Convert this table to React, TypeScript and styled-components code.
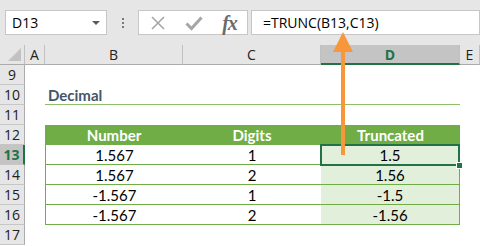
import React from "react";
import styled, { createGlobalStyle } from "styled-components";

const Global = createGlobalStyle`
  html, body { margin: 0; padding: 0; background: #ffffff; }
  body { width: 480px; height: 246px; overflow: hidden; }
`;

const UI_FONT = `"Open Sans", "Noto Sans", "Liberation Sans", sans-serif`;
const CELL_FONT = `Lato, "Liberation Sans", sans-serif`;

const Page = styled.div`
  position: relative;
  width: 480px;
  height: 246px;
  overflow: hidden;
  background: #ffffff;
`;

/* ---------- formula bar ---------- */
const Bar = styled.div`
  height: 45px;
  box-sizing: border-box;
  background: #e6e6e6;
  display: flex;
  align-items: flex-start;
  padding: 10px 0 0 5px;
`;

const Box = styled.div<{ $w?: number }>`
  height: 25px;
  box-sizing: border-box;
  background: #ffffff;
  border: 1px solid #c6c6c6;
  display: flex;
  align-items: center;
  ${(p) => (p.$w ? `width: ${p.$w}px; flex: none;` : "flex: 1;")}
`;

const NameText = styled.span`
  font-family: ${UI_FONT};
  font-size: 14px;
  color: #000;
  padding-left: 6px;
  flex: 1;
`;

const Caret = styled.span`
  width: 0;
  height: 0;
  border-left: 4px solid transparent;
  border-right: 4px solid transparent;
  border-top: 4px solid #5a5a5a;
  margin-right: 6px;
`;

const Grip = styled.div`
  width: 31px;
  height: 25px;
  flex: none;
  display: flex;
  flex-direction: column;
  align-items: center;
  justify-content: center;
  gap: 2px;
  & > i {
    display: block;
    width: 2px;
    height: 2px;
    background: #7a7a7a;
  }
`;

const IconSlot = styled.div<{ $w: number }>`
  width: ${(p) => p.$w}px;
  height: 23px;
  display: flex;
  align-items: center;
  justify-content: center;
  flex: none;
`;

const Fx = styled.span`
  font-family: "Liberation Serif", "DejaVu Serif", serif;
  font-style: italic;
  font-weight: bold;
  font-size: 20px;
  line-height: 20px;
  color: #6a6a6a;
  letter-spacing: -1px;
`;

const FormulaText = styled.span`
  font-family: ${UI_FONT};
  font-size: 14px;
  color: #000;
  padding-left: 11px;
`;

/* ---------- sheet grid ---------- */
const COLS = [25, 20, 138, 138, 139, 20];

const Row = styled.div<{ $h?: number }>`
  display: flex;
  height: ${(p) => p.$h ?? 20}px;
`;

const ColHead = styled.div<{ $w: number; $sel?: boolean }>`
  width: ${(p) => p.$w}px;
  flex: none;
  box-sizing: border-box;
  height: 20px;
  background: ${(p) => (p.$sel ? "#c4c4c4" : "#e6e6e6")};
  border-right: 1px solid #c0c0c0;
  border-bottom: ${(p) => (p.$sel ? "2px solid #217346" : "1px solid #ababab")};
  display: flex;
  align-items: center;
  justify-content: center;
  font-family: ${UI_FONT};
  font-size: 14px;
  font-weight: ${(p) => (p.$sel ? 700 : 400)};
  color: ${(p) => (p.$sel ? "#217346" : "#222")};
  position: relative;
`;

const Corner = styled.div`
  width: 0;
  height: 0;
  position: absolute;
  right: 3px;
  bottom: 3px;
  border-left: 13px solid transparent;
  border-bottom: 13px solid #c2c2c2;
`;

const RowHead = styled.div<{ $sel?: boolean }>`
  width: 25px;
  flex: none;
  box-sizing: border-box;
  background: ${(p) => (p.$sel ? "#c4c4c4" : "#e6e6e6")};
  border-bottom: 1px solid #c6c6c6;
  border-right: ${(p) => (p.$sel ? "2px solid #217346" : "1px solid #ababab")};
  display: flex;
  align-items: center;
  justify-content: center;
  font-family: ${UI_FONT};
  font-size: 14px;
  font-weight: ${(p) => (p.$sel ? 700 : 400)};
  color: ${(p) => (p.$sel ? "#217346" : "#222")};
`;

const Gap = styled.div<{ $w: number }>`
  width: ${(p) => p.$w}px;
  flex: none;
`;

const Table = styled.div`
  width: 415px;
  flex: none;
  display: flex;
  box-sizing: border-box;
`;

const Title = styled.div`
  width: 415px;
  flex: none;
  box-sizing: border-box;
  border-bottom: 1px solid #8fbd6b;
  display: flex;
  align-items: center;
  padding: 1px 0 0 3px;
  font-family: ${CELL_FONT};
  font-size: 15px;
  font-weight: 700;
  color: #44546a;
`;

const HeadCell = styled.div<{ $w: number }>`
  width: ${(p) => p.$w}px;
  flex: none;
  background: #70ad47;
  color: #ffffff;
  display: flex;
  align-items: center;
  justify-content: center;
  font-family: ${CELL_FONT};
  font-size: 15px;
  font-weight: 700;
`;

const DataRow = styled(Table)`
  border-left: 1px solid #70ad47;
  border-right: 1px solid #70ad47;
  border-bottom: 1px solid #70ad47;
`;

const Cell = styled.div<{ $w: number; $tint?: boolean }>`
  width: ${(p) => p.$w}px;
  flex: none;
  background: ${(p) => (p.$tint ? "#e2efda" : "#ffffff")};
  display: flex;
  align-items: center;
  justify-content: center;
  font-family: ${CELL_FONT};
  font-size: 15px;
  color: #000;
`;

/* ---------- overlays ---------- */
const Selection = styled.div`
  position: absolute;
  left: 320px;
  top: 144px;
  width: 140px;
  height: 22px;
  box-sizing: border-box;
  border: 2px solid #217346;
  pointer-events: none;
`;

const Handle = styled.div`
  position: absolute;
  right: -5px;
  bottom: -5px;
  width: 5px;
  height: 5px;
  background: #217346;
  border: 1px solid #ffffff;
`;

const Arrow = styled.svg`
  position: absolute;
  left: 330px;
  top: 30px;
  pointer-events: none;
`;

const rows = [
  { n: 13, num: "1.567", d: "1", t: "1.5" },
  { n: 14, num: "1.567", d: "2", t: "1.56" },
  { n: 15, num: "-1.567", d: "1", t: "-1.5" },
  { n: 16, num: "-1.567", d: "2", t: "-1.56" },
];

const TW = [138, 138, 139];

export default function App() {
  return (
    <Page>
      <Global />
      <Bar>
        <Box $w={102}>
          <NameText>D13</NameText>
          <Caret />
        </Box>
        <Grip>
          <i />
          <i />
          <i />
        </Grip>
        <Box $w={110}>
          <IconSlot $w={37}>
            <svg width="16" height="16" viewBox="0 0 16 16">
              <path d="M2 2 L14 14 M14 2 L2 14" stroke="#a6a6a6" strokeWidth="1.6" fill="none" />
            </svg>
          </IconSlot>
          <IconSlot $w={36}>
            <svg width="18" height="16" viewBox="0 0 18 16">
              <path d="M1.5 8.5 L6.5 13.5 L16.5 2.5" stroke="#a6a6a6" strokeWidth="3" fill="none" />
            </svg>
          </IconSlot>
          <IconSlot $w={35}>
            <Fx>fx</Fx>
          </IconSlot>
        </Box>
        <Gap $w={3} />
        <Box>
          <FormulaText>=TRUNC(B13,C13)</FormulaText>
        </Box>
      </Bar>

      <Row>
        <ColHead $w={COLS[0]}>
          <Corner />
        </ColHead>
        <ColHead $w={COLS[1]}>A</ColHead>
        <ColHead $w={COLS[2]}>B</ColHead>
        <ColHead $w={COLS[3]}>C</ColHead>
        <ColHead $w={COLS[4]} $sel>
          D
        </ColHead>
        <ColHead $w={COLS[5]}>E</ColHead>
      </Row>

      <Row>
        <RowHead>9</RowHead>
      </Row>
      <Row>
        <RowHead>10</RowHead>
        <Gap $w={20} />
        <Title>Decimal</Title>
      </Row>
      <Row>
        <RowHead>11</RowHead>
      </Row>
      <Row>
        <RowHead>12</RowHead>
        <Gap $w={20} />
        <Table>
          <HeadCell $w={TW[0]}>Number</HeadCell>
          <HeadCell $w={TW[1]}>Digits</HeadCell>
          <HeadCell $w={TW[2]}>Truncated</HeadCell>
        </Table>
      </Row>
      {rows.map((r) => (
        <Row key={r.n}>
          <RowHead $sel={r.n === 13}>{r.n}</RowHead>
          <Gap $w={20} />
          <DataRow>
            <Cell $w={TW[0] - 1}>{r.num}</Cell>
            <Cell $w={TW[1]}>{r.d}</Cell>
            <Cell $w={TW[2] - 1} $tint>
              {r.t}
            </Cell>
          </DataRow>
        </Row>
      ))}
      <Row>
        <RowHead>17</RowHead>
      </Row>

      <Selection>
        <Handle />
      </Selection>

      <Arrow width="26" height="128" viewBox="0 0 26 128">
        <path d="M11 20 L11 125 L15 125 L15 20 Z" fill="#f7963b" />
        <path d="M13 2 L3 22 L23 22 Z" fill="#f7963b" />
      </Arrow>
    </Page>
  );
}
